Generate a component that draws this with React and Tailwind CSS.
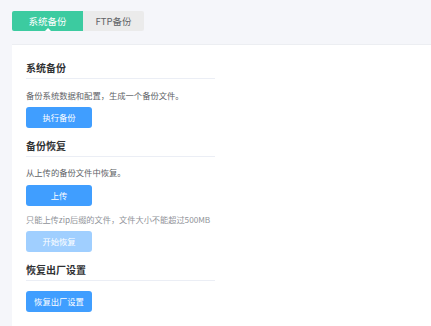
export default function App() {
  const font = { fontFamily: '"Noto Sans CJK SC", "Noto Sans", sans-serif' }
  return (
    <div className="h-[326px] w-[431px] overflow-hidden bg-[#f5f6fa] pl-[12px] pt-[11px]" style={font}>
      <div className="flex h-[20px] w-[132px] overflow-hidden rounded-[2px] text-[9.5px]">
        <div className="relative flex w-[71px] items-center justify-center bg-[#3ccba0] text-white">
          系统备份
          <span className="absolute bottom-0 left-1/2 -ml-[3px] h-0 w-0 border-x-[3px] border-b-[3px] border-x-transparent border-b-white" />
        </div>
        <div className="flex flex-1 items-center justify-center bg-[#ebebeb] text-[#606266]">FTP备份</div>
      </div>

      <div className="mt-[13px] h-full border-t border-[#eceef2] bg-white pl-[14px] pt-[15px]">
        <div className="w-[189px]">
          <h3 className="border-b border-[#ebeef5] pb-[2px] text-[10px] font-bold leading-[16px] text-[#303133]">系统备份</h3>
          <p className="mt-[9px] text-[8.3px] leading-[14px] text-[#606266]">备份系统数据和配置，生成一个备份文件。</p>
          <button className="mt-[5px] h-[21px] w-[66px] rounded-[3px] bg-[#409eff] text-[8.3px] text-white">执行备份</button>

          <h3 className="mt-[10px] border-b border-[#ebeef5] pb-[2px] text-[10px] font-bold leading-[16px] text-[#303133]">备份恢复</h3>
          <p className="mt-[8px] text-[8.3px] leading-[14px] text-[#606266]">从上传的备份文件中恢复。</p>
          <button className="mt-[6px] h-[21px] w-[66px] rounded-[3px] bg-[#409eff] text-[8.3px] text-white">上传</button>
          <p className="mt-[6px] whitespace-nowrap text-[8.2px] leading-[14px] text-[#909399]">只能上传zip后缀的文件，文件大小不能超过500MB</p>
          <button className="mt-[5px] h-[21px] w-[66px] cursor-not-allowed rounded-[3px] bg-[#a0cfff] text-[8.3px] text-white">开始恢复</button>

          <h3 className="mt-[10px] border-b border-[#ebeef5] pb-[2px] text-[10px] font-bold leading-[16px] text-[#303133]">恢复出厂设置</h3>
          <button className="mt-[10px] h-[21px] w-[66px] rounded-[3px] bg-[#409eff] text-[8.3px] text-white">恢复出厂设置</button>
        </div>
      </div>
    </div>
  )
}
